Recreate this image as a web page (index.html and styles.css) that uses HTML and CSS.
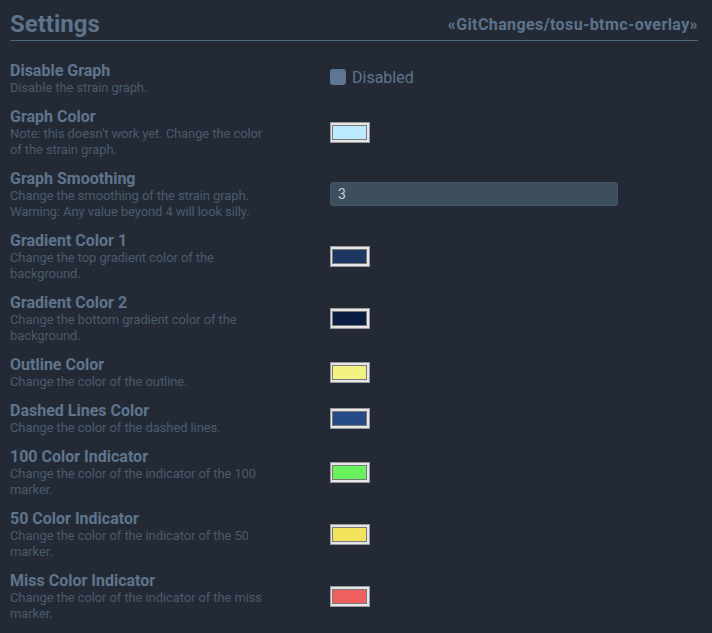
FILE: index.html
```html
<!DOCTYPE html>
<html lang="en">
<head>
<meta charset="utf-8">
<title>Settings</title>
<link rel="stylesheet" href="styles.css">
</head>
<body>
<div class="page">
  <header class="header">
    <h1 class="title">Settings</h1>
    <span class="repo">«GitChanges/tosu-btmc-overlay»</span>
  </header>
  <div class="rows">
    <div class="row">
      <div class="info">
        <div class="name">Disable Graph</div>
        <div class="desc">Disable the strain graph.</div>
      </div>
      <div class="control">
        <span class="check-wrap"><span class="checkbox"></span><span class="check-label">Disabled</span></span>
      </div>
    </div>
    <div class="row">
      <div class="info">
        <div class="name">Graph Color</div>
        <div class="desc">Note: this doesn't work yet. Change the color of the strain graph.</div>
      </div>
      <div class="control"><span class="swatch"><span class="swatch-fill" style="background:#bbe9ff"></span></span></div>
    </div>
    <div class="row">
      <div class="info">
        <div class="name">Graph Smoothing</div>
        <div class="desc">Change the smoothing of the strain graph. Warning: Any value beyond 4 will look silly.</div>
      </div>
      <div class="control"><div class="number">3</div></div>
    </div>
    <div class="row">
      <div class="info">
        <div class="name">Gradient Color 1</div>
        <div class="desc">Change the top gradient color of the background.</div>
      </div>
      <div class="control"><span class="swatch"><span class="swatch-fill" style="background:#1d3763"></span></span></div>
    </div>
    <div class="row">
      <div class="info">
        <div class="name">Gradient Color 2</div>
        <div class="desc">Change the bottom gradient color of the background.</div>
      </div>
      <div class="control"><span class="swatch"><span class="swatch-fill" style="background:#0a1d42"></span></span></div>
    </div>
    <div class="row">
      <div class="info">
        <div class="name">Outline Color</div>
        <div class="desc">Change the color of the outline.</div>
      </div>
      <div class="control"><span class="swatch"><span class="swatch-fill" style="background:#f3f384"></span></span></div>
    </div>
    <div class="row">
      <div class="info">
        <div class="name">Dashed Lines Color</div>
        <div class="desc">Change the color of the dashed lines.</div>
      </div>
      <div class="control"><span class="swatch"><span class="swatch-fill" style="background:#264a85"></span></span></div>
    </div>
    <div class="row">
      <div class="info">
        <div class="name">100 Color Indicator</div>
        <div class="desc">Change the color of the indicator of the 100 marker.</div>
      </div>
      <div class="control"><span class="swatch"><span class="swatch-fill" style="background:#6af25e"></span></span></div>
    </div>
    <div class="row">
      <div class="info">
        <div class="name">50 Color Indicator</div>
        <div class="desc">Change the color of the indicator of the 50 marker.</div>
      </div>
      <div class="control"><span class="swatch"><span class="swatch-fill" style="background:#f2e35c"></span></span></div>
    </div>
    <div class="row">
      <div class="info">
        <div class="name">Miss Color Indicator</div>
        <div class="desc">Change the color of the indicator of the miss marker.</div>
      </div>
      <div class="control"><span class="swatch"><span class="swatch-fill" style="background:#f06060"></span></span></div>
    </div>
  </div>
</div>
</body>
</html>
```

FILE: styles.css
```css
html, body {
  margin: 0;
  padding: 0;
  background: #232a35;
}
body {
  font-family: Roboto, "Liberation Sans", sans-serif;
  color: #5f758d;
}
.page {
  padding: 10px 14px 0 10px;
}
.header {
  display: flex;
  justify-content: space-between;
  align-items: center;
  border-bottom: 1px solid #4d6680;
  padding-bottom: 2px;
}
.title {
  margin: 0;
  font-size: 24px;
  font-weight: 700;
  line-height: normal;
  color: #5d738b;
}
.repo {
  font-size: 16px;
  font-weight: 700;
  letter-spacing: 0.4px;
  color: #5d738b;
}
.rows {
  display: flex;
  flex-direction: column;
  gap: 12px;
  padding-top: 21px;
}
.row {
  display: grid;
  grid-template-columns: 320px 1fr;
  align-items: center;
}
.info {
  width: 265px;
}
.name {
  font-size: 16px;
  font-weight: 700;
  line-height: 18px;
  color: #5f758d;
}
.desc {
  font-size: 13px;
  line-height: 16px;
  letter-spacing: -0.1px;
  color: #4b5b6d;
}
.control {
  display: flex;
  align-items: center;
  margin-bottom: 2px;
}
.check-wrap {
  display: flex;
  align-items: center;
  gap: 6px;
  margin-bottom: 2px;
}
.checkbox {
  width: 16px;
  height: 16px;
  border-radius: 3px;
  background: #5f7690;
}
.check-label {
  font-size: 16px;
  color: #5f758d;
}
.swatch {
  box-sizing: border-box;
  width: 40px;
  height: 21px;
  border: 1px solid #9a9a9a;
  background: #e6e6e6;
  padding: 2px 2px 2px 1px;
  display: flex;
}
.swatch-fill {
  flex: 1;
  border: 1px solid #7a7a7a;
}
.number {
  box-sizing: border-box;
  width: 288px;
  height: 24px;
  border-radius: 3px;
  background: #3d4e5d;
  border: 1px solid #44566a;
  color: #c6d3e0;
  font-size: 14px;
  line-height: 22px;
  padding-left: 7px;
}
```
